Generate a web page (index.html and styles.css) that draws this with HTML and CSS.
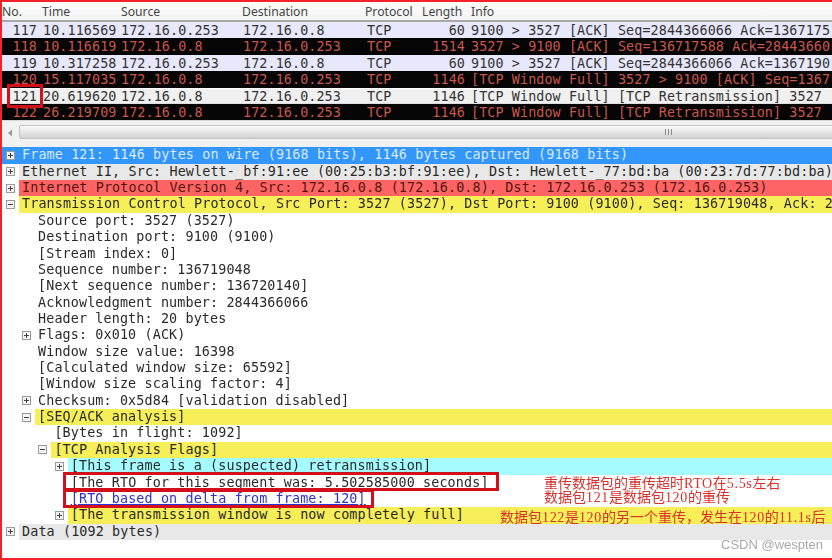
FILE: index.html
```html
<!DOCTYPE html>
<html lang="zh">
<head>
<meta charset="utf-8">
<title>Wireshark</title>
<link rel="stylesheet" href="styles.css">
</head>
<body>
<div class="window">
  <div class="head">
    <span>No.</span><span>Time</span><span>Source</span><span>Destination</span><span>Protocol</span><span>Length</span><span>Info</span>
  </div>
  <div class="packets">
    <div class="pkt ack"><span class="no">117</span><span>10.116569</span><span>172.16.0.253</span><span>172.16.0.8</span><span class="proto">TCP</span><span class="len">60</span><span>9100 &gt; 3527 [ACK] Seq=2844366066 Ack=1367175</span></div>
    <div class="pkt bad"><span class="no">118</span><span>10.116619</span><span>172.16.0.8</span><span>172.16.0.253</span><span class="proto">TCP</span><span class="len">1514</span><span>3527 &gt; 9100 [ACK] Seq=136717588 Ack=28443660</span></div>
    <div class="pkt ack"><span class="no">119</span><span>10.317258</span><span>172.16.0.253</span><span>172.16.0.8</span><span class="proto">TCP</span><span class="len">60</span><span>9100 &gt; 3527 [ACK] Seq=2844366066 Ack=1367190</span></div>
    <div class="pkt bad"><span class="no">120</span><span>15.117035</span><span>172.16.0.8</span><span>172.16.0.253</span><span class="proto">TCP</span><span class="len">1146</span><span>[TCP Window Full] 3527 &gt; 9100 [ACK] Seq=1367</span></div>
    <div class="pkt sel"><span class="no">121</span><span>20.619620</span><span>172.16.0.8</span><span>172.16.0.253</span><span class="proto">TCP</span><span class="len">1146</span><span>[TCP Window Full] [TCP Retransmission] 3527</span></div>
    <div class="pkt bad"><span class="no">122</span><span>26.219709</span><span>172.16.0.8</span><span>172.16.0.253</span><span class="proto">TCP</span><span class="len">1146</span><span>[TCP Window Full] [TCP Retransmission] 3527</span></div>
  </div>
  <div class="hscroll">
    <svg class="arrow" width="6" height="8" viewBox="0 0 6 8"><path d="M5 0.5 1 4l4 3.5z" fill="#9a9a9a"/></svg>
    <div class="thumb"><span class="grip"></span></div>
  </div>
  <div class="tree">
    <div class="row"><div class="line l0 blue"><svg class="tog" viewBox="0 0 9 9"><use href="#plus"/></svg><span class="lab">Frame 121: 1146 bytes on wire (9168 bits), 1146 bytes captured (9168 bits)</span></div></div>
    <div class="row"><div class="line l0"><svg class="tog" viewBox="0 0 9 9"><use href="#plus"/></svg><span class="lab grey">Ethernet II, Src: Hewlett-_bf:91:ee (00:25:b3:bf:91:ee), Dst: Hewlett-_77:bd:ba (00:23:7d:77:bd:ba)</span></div></div>
    <div class="row"><div class="line l0"><svg class="tog" viewBox="0 0 9 9"><use href="#plus"/></svg><span class="lab red">Internet Protocol Version 4, Src: 172.16.0.8 (172.16.0.8), Dst: 172.16.0.253 (172.16.0.253)</span></div></div>
    <div class="row"><div class="line l0"><svg class="tog" viewBox="0 0 9 9"><use href="#minus"/></svg><span class="lab yellow">Transmission Control Protocol, Src Port: 3527 (3527), Dst Port: 9100 (9100), Seq: 136719048, Ack: 2</span></div></div>
    <div class="row"><div class="line l1 leaf"><span class="lab">Source port: 3527 (3527)</span></div></div>
    <div class="row"><div class="line l1 leaf"><span class="lab">Destination port: 9100 (9100)</span></div></div>
    <div class="row"><div class="line l1 leaf"><span class="lab">[Stream index: 0]</span></div></div>
    <div class="row"><div class="line l1 leaf"><span class="lab">Sequence number: 136719048</span></div></div>
    <div class="row"><div class="line l1 leaf"><span class="lab">[Next sequence number: 136720140]</span></div></div>
    <div class="row"><div class="line l1 leaf"><span class="lab">Acknowledgment number: 2844366066</span></div></div>
    <div class="row"><div class="line l1 leaf"><span class="lab">Header length: 20 bytes</span></div></div>
    <div class="row"><div class="line l1"><svg class="tog" viewBox="0 0 9 9"><use href="#plus"/></svg><span class="lab">Flags: 0x010 (ACK)</span></div></div>
    <div class="row"><div class="line l1 leaf"><span class="lab">Window size value: 16398</span></div></div>
    <div class="row"><div class="line l1 leaf"><span class="lab">[Calculated window size: 65592]</span></div></div>
    <div class="row"><div class="line l1 leaf"><span class="lab">[Window size scaling factor: 4]</span></div></div>
    <div class="row"><div class="line l1"><svg class="tog" viewBox="0 0 9 9"><use href="#plus"/></svg><span class="lab">Checksum: 0x5d84 [validation disabled]</span></div></div>
    <div class="row"><div class="line l1"><svg class="tog" viewBox="0 0 9 9"><use href="#minus"/></svg><span class="lab yellow">[SEQ/ACK analysis]</span></div></div>
    <div class="row"><div class="line l2 leaf"><span class="lab">[Bytes in flight: 1092]</span></div></div>
    <div class="row"><div class="line l2"><svg class="tog" viewBox="0 0 9 9"><use href="#minus"/></svg><span class="lab yellow">[TCP Analysis Flags]</span></div></div>
    <div class="row"><div class="line l3"><svg class="tog" viewBox="0 0 9 9"><use href="#plus"/></svg><span class="lab cyan">[This frame is a (suspected) retransmission]</span></div></div>
    <div class="row"><div class="line l3 leaf"><span class="lab">[The RTO for this segment was: 5.502585000 seconds]</span></div></div>
    <div class="row"><div class="line l3 leaf"><span class="lab link">[RTO based on delta from frame: 120]</span></div></div>
    <div class="row"><div class="line l3"><svg class="tog" viewBox="0 0 9 9"><use href="#plus"/></svg><span class="lab yellow">[The transmission window is now completely full]</span></div></div>
    <div class="row"><div class="line l0"><svg class="tog" viewBox="0 0 9 9"><use href="#plus"/></svg><span class="lab grey">Data (1092 bytes)</span></div></div>
  </div>

  <div class="box box-no"></div>
  <div class="box box-rto"></div>
  <div class="box box-delta"></div>
  <div class="note note-a">重传数据包的重传超时<span class="num">RTO</span>在<span class="num">5.5s</span>左右</div>
  <div class="note note-b">数据包<span class="num">121</span>是数据包<span class="num">120</span>的重传</div>
  <div class="note note-c">数据包<span class="num">122</span>是<span class="num">120</span>的另一个重传，发生在<span class="num">120</span>的<span class="num">11.1s</span>后</div>
  <div class="mark">CSDN @wespten</div>
</div>
<svg class="defs" width="0" height="0">
  <symbol id="plus" viewBox="0 0 9 9"><rect x=".5" y=".5" width="8" height="8" fill="#f4f4f4" stroke="#9a9a9a"/><path d="M2 4.5h5M4.5 2v5" stroke="#444"/></symbol>
  <symbol id="minus" viewBox="0 0 9 9"><rect x=".5" y=".5" width="8" height="8" fill="#f4f4f4" stroke="#9a9a9a"/><path d="M2 4.5h5" stroke="#444"/></symbol>
</svg>
</body>
</html>
```
FILE: styles.css
```css
* { box-sizing: border-box; }
html, body { margin: 0; padding: 0; }
body { width: 832px; height: 560px; overflow: hidden; background: #fff; }
.defs { position: absolute; }

.window {
  position: relative;
  width: 832px;
  height: 560px;
  overflow: hidden;
  border: solid #f5222a;
  border-width: 2px 0 2px 2px;
  display: flex;
  flex-direction: column;
  font-family: "DejaVu Sans Mono", monospace;
  font-size: 13.4px;
  letter-spacing: 0.1px;
  color: #2a2a2a;
  filter: blur(0.3px);
}

.head {
  height: 20px;
  flex: none;
  display: grid;
  grid-template-columns: 40px 79px 121px 123px 57px 49px 1fr;
  align-items: center;
  background: linear-gradient(#ffffff, #f2f2f2);
  border-bottom: 2px solid #a8a8a8;
  font-family: "Noto Sans", sans-serif;
  font-size: 12.2px;
  letter-spacing: 0;
  color: #444;
}

.packets { flex: none; }
.pkt {
  height: 16.4px;
  line-height: 18px;
  display: grid;
  grid-template-columns: 34px 78px 122px 122px 88px 19px 1fr;
  white-space: pre;
  overflow: hidden;
}
.pkt > span { display: block; }
.pkt .no { text-align: right; transform: translateX(1px); }
.pkt > span:nth-child(2) { padding-left: 7px; width: 85px; }
.pkt > span:nth-child(3) { padding-left: 7px; }
.pkt > span:nth-child(4) { padding-left: 7px; }
.pkt > span:nth-child(7) { padding-left: 6px; }
.pkt .proto { padding-left: 9px; }
.pkt .len { text-align: right; width: 62px; grid-column: 6; justify-self: end; }
.ack { background: #e8e8fc; color: #333; }
.bad { background: #050505; color: #c9574c; }
.sel { background: #f0f0f0; color: #333; border-top: 1px solid #fff; border-bottom: 1px solid #ddd; line-height: 16px; }

.hscroll {
  flex: none;
  height: 27px;
  padding: 4px 0 0 0;
  display: flex;
  align-items: flex-start;
  background: #f1f1f1;
  border-top: 1px solid #d6d6d6;
  overflow: hidden;
}
.arrow { flex: none; margin: 4px 6px 0 5px; }
.thumb {
  flex: none;
  width: 1300px;
  height: 14px;
  display: flex;
  align-items: center;
  justify-content: center;
  background: linear-gradient(#fafafa, #e4e4e4 55%, #d2d2d2);
  border: 1px solid #c4c4c4;
  border-radius: 2px;
}
.grip {
  width: 8px;
  height: 6px;
  background: repeating-linear-gradient(90deg, #8a8a8a 0 1px, transparent 1px 3px);
}

.tree { flex: 1; min-height: 0; }
.row { height: 16.37px; }
.line { display: flex; align-items: center; height: 100%; }
.tog { flex: none; width: 9px; height: 9px; margin-right: 4px; }
.lab {
  flex: 1;
  min-width: 0;
  height: 100%;
  padding-left: 3px;
  line-height: 15px;
  letter-spacing: 0.13px;
  white-space: pre;
}
.l0 { padding-left: 4px; }
.l1 { padding-left: 20px; }
.l2 { padding-left: 36.4px; }
.l3 { padding-left: 52.8px; }
.leaf { margin-left: 13px; }
.line.blue { background: #3396fa; color: #d6e9ff; }
.grey { position: relative; z-index: 1; background: #e8e8e8; }
.red { background: #ff6464; color: #531414; }
.yellow { background: #f7ef57; }
.cyan { background: #a4fcff; }
.link { color: #2c32cf; text-decoration: underline; }

.box { position: absolute; border: 3px solid #d40f1c; }
.box-no { left: 5px; top: 82px; width: 36px; height: 24px; }
.box-rto { left: 61px; top: 470px; width: 436px; height: 19px; }
.box-delta { left: 61px; top: 487px; width: 311px; height: 19px; }

.note {
  position: absolute;
  z-index: 2;
  font-family: "Liberation Serif", "Noto Sans CJK SC", serif;
  font-size: 14px;
  line-height: 16px;
  letter-spacing: 0;
  color: #d9302c;
  white-space: nowrap;
}
.num { letter-spacing: 0.65px; }
.note-a { left: 542px; top: 474px; }
.note-b { left: 542px; top: 488px; }
.note-c { left: 498px; top: 508px; }

.mark {
  position: absolute;
  z-index: 2;
  left: 719px;
  top: 535px;
  font-family: "Liberation Sans", sans-serif;
  font-size: 13px;
  letter-spacing: 0;
  color: #a9a9a9;
}
```
